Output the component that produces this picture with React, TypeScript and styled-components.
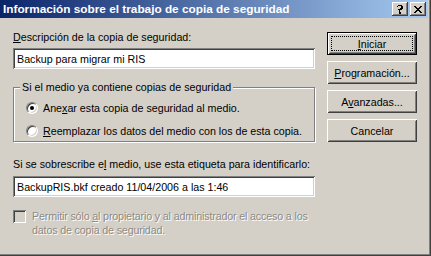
import React from "react";
import styled, { createGlobalStyle } from "styled-components";

const Global = createGlobalStyle`
  html, body { margin: 0; padding: 0; background: #d4d0c8; }
  body { font-family: "Liberation Sans", Arial, sans-serif; font-size: 10.7px; color: #000; }
`;

const face = "#d4d0c8";

const Window = styled.div`
  width: 431px;
  height: 256px;
  box-sizing: border-box;
  background: ${face};
  border-right: 1px solid #404040;
  border-bottom: 1px solid #404040;
  box-shadow: inset -1px -1px #808080;
  padding: 0 2px 2px 0;
  display: flex;
  flex-direction: column;
  overflow: hidden;
`;

const TitleBar = styled.div`
  height: 18px;
  flex: none;
  background: linear-gradient(to right, #0a246a, #a6caf0);
  display: flex;
  align-items: center;
  padding: 0 2px 0 3px;
`;

const Title = styled.div`
  flex: 1;
  color: #fff;
  font-weight: bold;
  font-size: 11.8px;
  line-height: 18px;
  white-space: nowrap;
`;

const CaptionButtons = styled.div`
  display: flex;
  gap: 2px;
`;

const CaptionButton = styled.div`
  width: 16px;
  height: 14px;
  box-sizing: border-box;
  background: ${face};
  box-shadow: inset -1px -1px #404040, inset 1px 1px #fff, inset -2px -2px #808080, inset 2px 2px ${face};
  display: flex;
  align-items: center;
  justify-content: center;
`;

const Body = styled.div`
  flex: 1;
  display: flex;
  padding: 0 0 0 13px;
`;

const LeftCol = styled.div`
  width: 302px;
  display: flex;
  flex-direction: column;
  padding-top: 13px;
`;

const RightCol = styled.div`
  margin-left: 12px;
  padding-top: 14px;
  display: flex;
  flex-direction: column;
  gap: 6px;
`;

const Label = styled.div<{ $mt?: number }>`
  line-height: 13px;
  height: 13px;
  margin-top: ${(p) => p.$mt ?? 0}px;
  white-space: nowrap;
`;

const Edit = styled.div<{ $mt?: number }>`
  margin-top: ${(p) => p.$mt ?? 0}px;
  height: 21px;
  box-sizing: border-box;
  background: #fff;
  box-shadow: inset 1px 1px #808080, inset -1px -1px #fff, inset 2px 2px #404040, inset -2px -2px ${face};
  padding: 0 4px;
  display: flex;
  align-items: center;
  white-space: nowrap;
`;

const Group = styled.div<{ $mt?: number }>`
  position: relative;
  margin-top: ${(p) => p.$mt ?? 0}px;
  height: 55px;
  box-sizing: border-box;
  border: 1px solid #808080;
  box-shadow: inset 1px 1px #fff, 1px 1px #fff;
  padding: 13px 0 0 12px;
  display: flex;
  flex-direction: column;
  gap: 10px;
`;

const Legend = styled.div`
  position: absolute;
  top: -7px;
  left: 6px;
  padding: 0 2px 0 2px;
  background: ${face};
  line-height: 13px;
  white-space: nowrap;
`;

const OptionRow = styled.div`
  display: flex;
  align-items: center;
  height: 13px;
  gap: 5px;
  white-space: nowrap;
`;

const Radio = styled.div<{ $checked?: boolean }>`
  width: 12px;
  height: 12px;
  flex: none;
  box-sizing: border-box;
  border-radius: 50%;
  background: #fff;
  border-style: solid;
  border-width: 1px;
  border-color: #808080 #fff #fff #808080;
  box-shadow: inset 1px 1px #404040, inset -1px -1px ${face};
  display: flex;
  align-items: center;
  justify-content: center;
  &::after {
    content: "";
    width: 4px;
    height: 4px;
    border-radius: 50%;
    background: ${(p) => (p.$checked ? "#000" : "transparent")};
  }
`;

const CheckRow = styled.div`
  margin-top: 13px;
  display: flex;
  gap: 6px;
  align-items: flex-start;
`;

const Check = styled.div`
  width: 13px;
  height: 13px;
  flex: none;
  box-sizing: border-box;
  background: ${face};
  box-shadow: inset 1px 1px #808080, inset -1px -1px #fff, inset 2px 2px #404040, inset -2px -2px ${face};
`;

const DisabledText = styled.div`
  color: #8c8a86;
  text-shadow: 1px 1px #fff;
  line-height: 14px;
  margin-top: -1px;
  letter-spacing: -0.15px;
  white-space: nowrap;
`;

const Button = styled.div<{ $default?: boolean }>`
  width: 90px;
  height: 23px;
  box-sizing: border-box;
  background: ${face};
  display: flex;
  align-items: center;
  justify-content: center;
  position: relative;
  box-shadow: ${(p) =>
    p.$default
      ? `inset 1px 1px #000, inset -1px -1px #000, inset 2px 2px #fff, inset -2px -2px #404040, inset 3px 3px ${face}, inset -3px -3px #808080`
      : `inset 1px 1px #fff, inset -1px -1px #404040, inset 2px 2px ${face}, inset -2px -2px #808080`};
`;

const FocusRect = styled.div`
  position: absolute;
  inset: 4px;
  border: 1px dotted #000;
`;

const U = styled.span`
  text-decoration: underline;
`;

export default function App() {
  return (
    <>
      <Global />
      <Window>
        <TitleBar>
          <Title>Información sobre el trabajo de copia de seguridad</Title>
          <CaptionButtons>
            <CaptionButton>
              <svg width="8" height="9" viewBox="0 0 8 9">
                <path d="M1 1h1v-1h4v1h1v3h-1v1h-2v2h-1v-2h-1v-1h2v-1h1v-2h-3v1h-1z" fill="#000" />
                <path d="M3 7h2v2h-2z" fill="#000" />
              </svg>
            </CaptionButton>
            <CaptionButton>
              <svg width="8" height="7" viewBox="0 0 8 7">
                <path d="M0 0h2v1h1v1h2v-1h1v-1h2v1h-1v1h-1v1h-1v1h1v1h1v1h1v1h-2v-1h-1v-1h-2v1h-1v1h-2v-1h1v-1h1v-1h1v-1h-1v-1h-1v-1h-1z" fill="#000" />
              </svg>
            </CaptionButton>
          </CaptionButtons>
        </TitleBar>
        <Body>
          <LeftCol>
            <Label>
              <U>D</U>escripción de la copia de seguridad:
            </Label>
            <Edit $mt={4}>Backup para migrar mi RIS</Edit>
            <Group $mt={18}>
              <Legend>Si el medio ya contiene copias de seguridad</Legend>
              <OptionRow>
                <Radio $checked />
                <span>
                  Ane<U>x</U>ar esta copia de seguridad al medio.
                </span>
              </OptionRow>
              <OptionRow>
                <Radio />
                <span>
                  <U>R</U>eemplazar los datos del medio con los de esta copia.
                </span>
              </OptionRow>
            </Group>
            <Label $mt={16}>
              Si se sobrescribe e<U>l</U> medio, use esta etiqueta para identificarlo:
            </Label>
            <Edit $mt={5}>BackupRIS.bkf creado 11/04/2006 a las 1:46</Edit>
            <CheckRow>
              <Check />
              <DisabledText>
                Permitir sólo <U>a</U>l propietario y al administrador el acceso a los
                <br />
                datos de copia de seguridad.
              </DisabledText>
            </CheckRow>
          </LeftCol>
          <RightCol>
            <Button $default>
              <FocusRect />
              <span>
                <U>I</U>niciar
              </span>
            </Button>
            <Button>
              <span>
                <U>P</U>rogramación...
              </span>
            </Button>
            <Button>
              <span>
                A<U>v</U>anzadas...
              </span>
            </Button>
            <Button>
              <span>Cancelar</span>
            </Button>
          </RightCol>
        </Body>
      </Window>
    </>
  );
}
